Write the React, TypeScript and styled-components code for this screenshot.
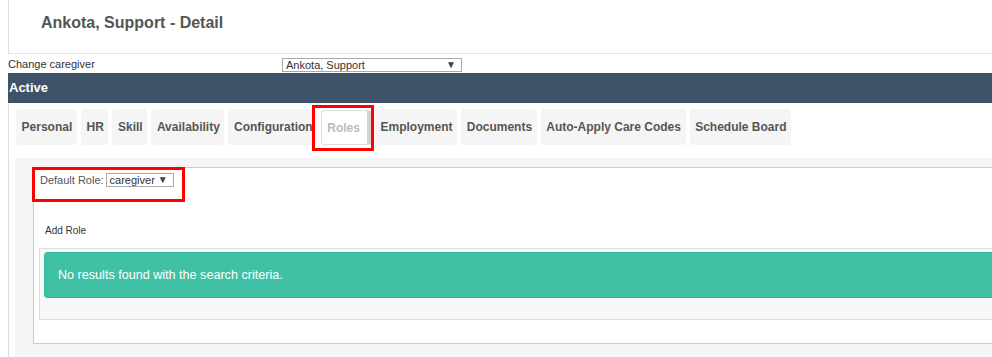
import React from 'react'
import styled, { createGlobalStyle } from 'styled-components'

const GlobalStyle = createGlobalStyle`
  html, body {
    margin: 0;
    padding: 0;
    background: #fff;
    overflow: hidden;
  }
  body {
    font-family: "Liberation Sans", Arial, sans-serif;
    color: #333;
  }
`

const tabs = [
  'Personal',
  'HR',
  'Skill',
  'Availability',
  'Configuration',
  'Roles',
  'Employment',
  'Documents',
  'Auto-Apply Care Codes',
  'Schedule Board',
]

const App: React.FC = () => {
  return (
    <>
      <GlobalStyle />
      <Page>
        <Header>
          <Title>Ankota, Support - Detail</Title>
        </Header>

        <CaregiverRow>
          <CaregiverLabel>Change caregiver</CaregiverLabel>
          <FakeSelect width="180px">
            <span>Ankota, Support</span>
            <Arrow>▼</Arrow>
          </FakeSelect>
        </CaregiverRow>

        <StatusBar>Active</StatusBar>

        <Body>
          <TabRow>
            {tabs.map((t) =>
              t === 'Roles' ? (
                <Tab key={t} $active>
                  {t}
                  <Highlight $top="-6px" $left="-10px" $right="-7px" $bottom="-7px" />
                </Tab>
              ) : (
                <Tab key={t}>{t}</Tab>
              )
            )}
          </TabRow>

          <Panel>
            <RoleBox>
              <Highlight $top="-1px" $left="-2px" $width="153px" $height="35px" />
              <RoleRow>
                <RoleLabel>Default Role:</RoleLabel>
                <FakeSelect width="68px">
                  <span>caregiver</span>
                  <Arrow>▼</Arrow>
                </FakeSelect>
              </RoleRow>
              <AddRole>Add Role</AddRole>
              <Grid>
                <Alert>No results found with the search criteria.</Alert>
              </Grid>
            </RoleBox>
          </Panel>
        </Body>
      </Page>
    </>
  )
}

export default App

const Page = styled.div`
  padding-left: 8px;
  height: 357px;
  overflow: hidden;
`

const Header = styled.div`
  box-sizing: border-box;
  height: 54px;
  border-left: 1px solid #ddd;
  border-bottom: 1px solid #e3e3e3;
  padding: 14px 0 0 32px;
`

const Title = styled.h1`
  margin: 0;
  font-size: 16px;
  font-weight: bold;
  color: #555;
`

const CaregiverRow = styled.div`
  display: flex;
  align-items: flex-end;
  height: 19px;
  padding-bottom: 1px;
  box-sizing: border-box;
  font-size: 11px;
`

const CaregiverLabel = styled.div`
  width: 274px;
  color: #333;
  line-height: 14px;
  transform: translateY(-1px);
`

const FakeSelect = styled.div<{ width: string }>`
  box-sizing: border-box;
  width: ${(p) => p.width};
  height: 14px;
  border: 1px solid #a9a9a9;
  display: flex;
  align-items: center;
  justify-content: space-between;
  padding: 0 5px 0 3px;
  font-size: 11px;
  color: #333;
  background: #fff;
  line-height: 12px;
`

const Arrow = styled.span`
  font-size: 10px;
  line-height: 10px;
  color: #444;
`

const StatusBar = styled.div`
  height: 30px;
  line-height: 30px;
  background: #3f5368;
  color: #fff;
  font-weight: bold;
  font-size: 13px;
  padding-left: 1px;
`

const Body = styled.div`
  border-left: 1px solid #ddd;
  padding-top: 6px;
  height: 254px;
`

const TabRow = styled.div`
  display: flex;
  gap: 4px;
  padding-left: 7px;
`

const Tab = styled.div<{ $active?: boolean }>`
  position: relative;
  box-sizing: border-box;
  display: flex;
  align-items: center;
  padding: ${(p) => (p.$active ? '0 7px 0 5px' : '0 4.6px 0 5.6px')};
  background: ${(p) => (p.$active ? '#fff' : '#f5f5f5')};
  border: ${(p) => (p.$active ? '1px solid #ddd' : 'none')};
  border-right: ${(p) => (p.$active ? '4px solid #d2d2d2' : 'none')};
  margin-top: ${(p) => (p.$active ? '1px' : '0')};
  height: ${(p) => (p.$active ? '35px' : '36px')};
  border-radius: 3px;
  font-size: 12px;
  font-weight: bold;
  color: ${(p) => (p.$active ? '#bbb' : '#555')};
  white-space: nowrap;
`

const Highlight = styled.div<{
  $top: string
  $left: string
  $right?: string
  $bottom?: string
  $width?: string
  $height?: string
}>`
  position: absolute;
  top: ${(p) => p.$top};
  left: ${(p) => p.$left};
  ${(p) => (p.$right ? `right: ${p.$right};` : '')}
  ${(p) => (p.$bottom ? `bottom: ${p.$bottom};` : '')}
  ${(p) => (p.$width ? `width: ${p.$width};` : '')}
  ${(p) => (p.$height ? `height: ${p.$height};` : '')}
  box-sizing: border-box;
  border: 3px solid #f00;
  pointer-events: none;
`

const Panel = styled.div`
  margin: 13px 0 0 6px;
  background: #f5f5f5;
  padding: 9px 0 40px 18px;
`

const RoleBox = styled.div`
  position: relative;
  background: #fff;
  border: 1px solid #ccc;
  border-right: none;
  padding: 5px 0 23px 5px;
`

const RoleRow = styled.div`
  display: flex;
  align-items: center;
  gap: 2px;
  padding-left: 1px;
  height: 14px;
`

const RoleLabel = styled.span`
  font-size: 11px;
  color: #555;
`

const AddRole = styled.div`
  margin: 38px 0 11px;
  padding-left: 6px;
  font-size: 10px;
  line-height: 12px;
  color: #333;
`

const Grid = styled.div`
  border: 1px solid #ddd;
  border-right: none;
  background: #f8f8f8;
  padding: 3px 0 21px 4px;
`

const Alert = styled.div`
  box-sizing: border-box;
  height: 46px;
  display: flex;
  align-items: center;
  padding-left: 13px;
  background: #40c1a6;
  border: 1px solid #2fb895;
  border-right: none;
  border-radius: 4px 0 0 4px;
  color: #fff;
  font-size: 12.6px;
`
